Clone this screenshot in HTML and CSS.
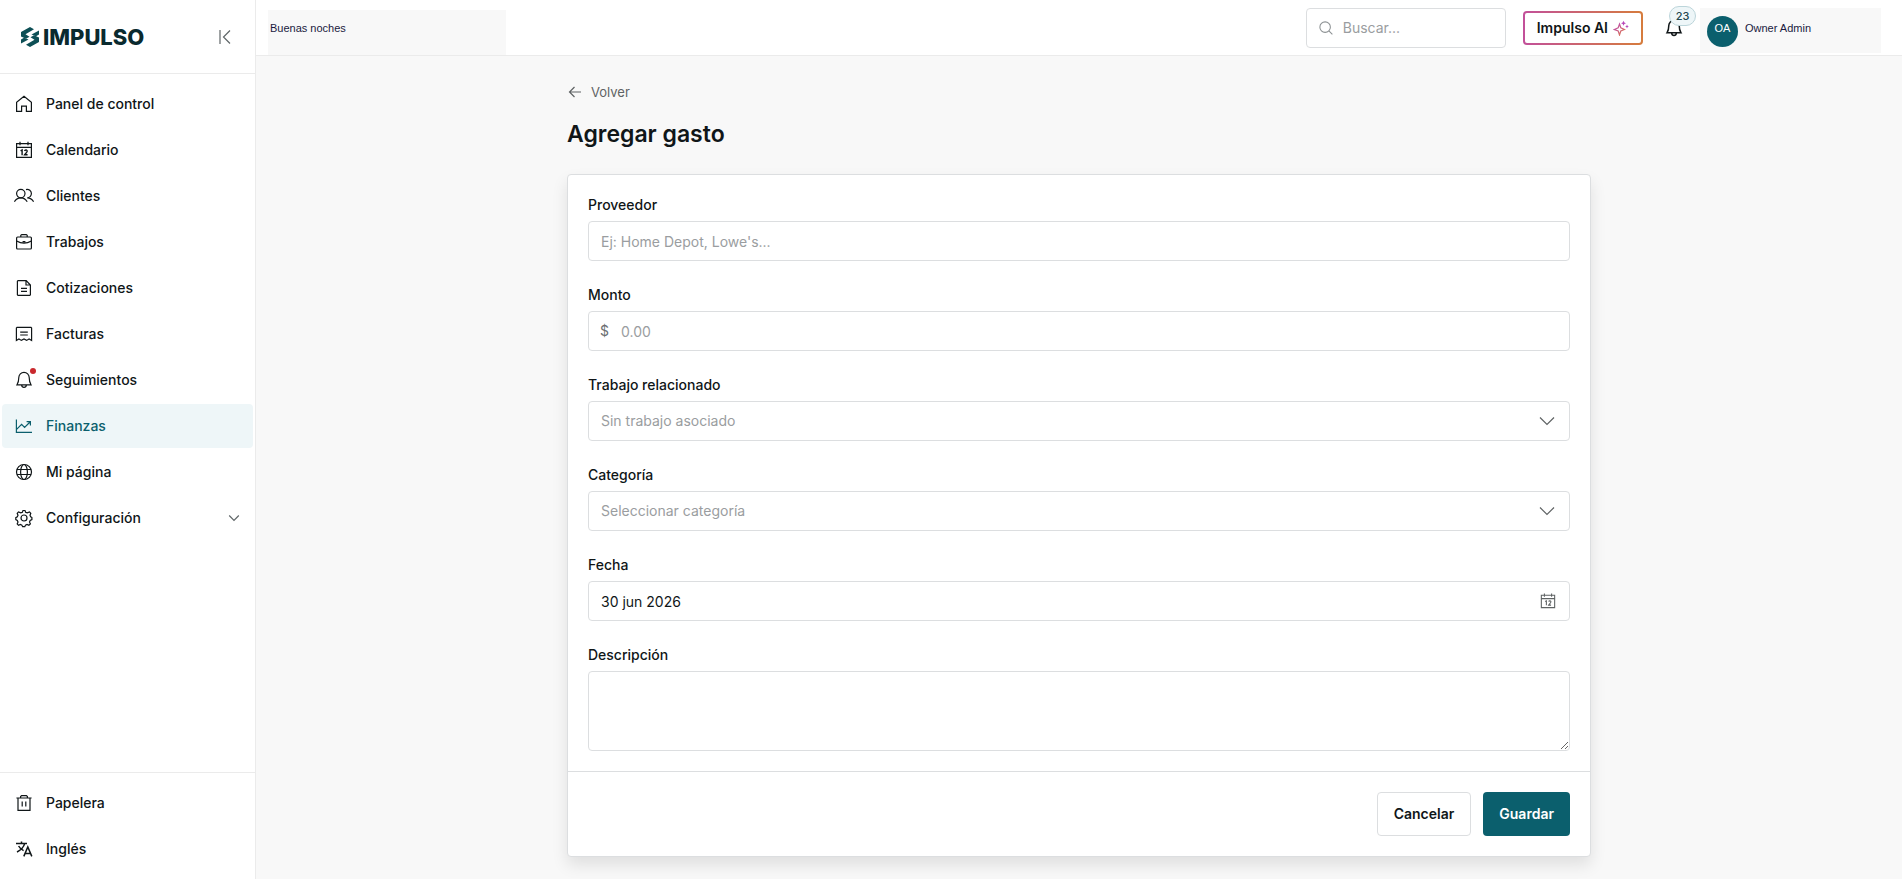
FILE: index.html
```html
<!DOCTYPE html>
<html lang="es">
<head>
  <meta charset="UTF-8">
  <title>Agregar gasto - Impulso</title>
  <meta name="viewport" content="width=device-width, initial-scale=1.0">
  <link rel="stylesheet" href="styles.css">
</head>
<body>

  <aside class="sidebar">
    <div class="sidebar-header">
      <a href="#" class="logo">
        <svg width="20" height="22" viewBox="0 0 20 22">
          <path d="M1 6l9-5 4 2.300-8.500 5 4 2.500-3.500 2L1 10.500z"/>
          <path d="M11.500 8.500L19 4.500v4l-3 1.700z"/>
          <path d="M19 16l-9 5-4-2.300 8.500-5-4-2.500 3.500-2 5 2.300z"/>
          <path d="M8.500 13.500L1 17.500v-4l3-1.700z"/>
        </svg>
        <span>IMPULSO</span>
      </a>
      <button type="button" class="icon-btn" aria-label="Contraer menú">
        <svg width="20" height="20" viewBox="0 0 20 20"><path d="M5 3v14M15 3.500L8.500 10l6.500 6.500"/></svg>
      </button>
    </div>

    <nav class="nav">
      <a href="#"><svg width="20" height="20" viewBox="0 0 20 20"><path d="M2.600 17.400V8.200L10 2.200l7.400 6v9.200h-5v-5.200H7.600v5.200z"/></svg>Panel de control</a>
      <a href="#"><svg width="20" height="20" viewBox="0 0 20 20"><path d="M2.600 3.600h14.800v13.800H2.600zM2.600 7.400h14.800M6 1.800v3.400M14 1.800v3.400"/><path stroke-width="1.400" d="M6.600 10.800l1.500-.9v5.300M10.600 11c.3-1.500 2.800-1.300 2.600.3-.1 1.100-1.700 2-2.600 3.400h3"/></svg>Calendario</a>
      <a href="#"><svg width="20" height="20" viewBox="0 0 20 20"><circle cx="6.800" cy="7.600" r="4.200"/><path d="M.4 15.800c1.400-2.600 3.700-4 6.400-4s5 1.400 6.400 4M12 3.600c3-.8 5.400 1.400 5.400 4a4.200 4.200 0 0 1-4.200 4.200c2.700 0 5 1.400 6.400 4"/></svg>Clientes</a>
      <a href="#"><svg width="20" height="20" viewBox="0 0 20 20"><rect x="2.600" y="5" width="14.800" height="12" rx="1"/><path d="M6.800 5V3.400l1-.8h4.400l1 .8V5M2.600 9c4.400 2.600 10.400 2.600 14.800 0M8.600 9.600h2.800"/></svg>Trabajos</a>
      <a href="#"><svg width="20" height="20" viewBox="0 0 20 20"><path d="M4 2.600h8.200L16.400 7v9.800l-.6.6H4l-.6-.6V3.200zM12 2.600V7h4.400M7 10.400h6M7 13.400h6"/></svg>Cotizaciones</a>
      <a href="#"><svg width="20" height="20" viewBox="0 0 20 20"><path d="M2.400 16.400V4l.6-.6h14l.6.6v12.400l-2.500-1.400-2.500 1.400-2.600-1.400-2.600 1.400L4.900 15zM6.200 8.200h7.600M6.200 11h7.600"/></svg>Facturas</a>
      <a href="#"><svg width="20" height="20" viewBox="0 0 20 20"><path d="M4.800 7.600a5.200 5.200 0 0 1 10.400 0c0 3.400.8 5.600 1.800 7.200H3c1-1.600 1.800-3.800 1.800-7.200zM7.600 15.200c.4 3 4.400 3 4.800 0"/></svg>Seguimientos<span class="dot"></span></a>
      <a href="#" class="active"><svg width="20" height="20" viewBox="0 0 20 20"><path d="M2.400 3.400v13H18M2.600 13.400l5-5 3 3L16 6M12.600 5.600h3.800v3.800"/></svg>Finanzas</a>
      <a href="#"><svg width="20" height="20" viewBox="0 0 20 20"><circle cx="10" cy="10" r="7.500"/><ellipse cx="10" cy="10" rx="3.400" ry="7.500"/><path d="M3 7.500h14M3 12.500h14"/></svg>Mi página</a>
      <a href="#"><svg width="20" height="20" viewBox="0 0 20 20"><circle cx="10" cy="10" r="3"/><path d="M8.400 4.200L9 2.500h2l.6 1.700 1.700.7 2.200-1 1.300 1.400-.8 1.900.7 1.600 1.200.8v2l-1.700.8-.7 1.600.9 1.900-1.500 1.400-1.900-.9-1.500.7-.7 1.600H8.600l-.7-1.600-1.500-.7-1.900.9-1.300-1.400.8-1.900-.7-1.600-1.500-.8v-2l1.500-.8.7-1.600-.8-1.900 1.300-1.400 2.200 1z"/></svg>Configuración<svg class="chevron" width="12" height="12" viewBox="0 0 12 12"><path d="M1.200 3.500L6 8.300l4.800-4.800"/></svg></a>
    </nav>

    <div class="nav nav-bottom">
      <a href="#"><svg width="20" height="20" viewBox="0 0 20 20"><path d="M2.400 5h15.200M4 5v12.400h12V5M6.600 5V3.600l1-1h4.800l1 1V5M8.200 8.600v5M11.800 8.600v5"/></svg>Papelera</a>
      <a href="#"><svg width="20" height="20" viewBox="0 0 20 20"><path stroke-width="1.500" d="M2 4.400h11M7.500 2.400v2M10.800 4.400C9.600 8.400 6.600 11.200 3 13M4.600 7c1.200 2.200 2.800 3.600 5 4.600M9.800 17.400l4-9.400 4 9.400M11 14.600h5.600"/></svg>Inglés</a>
    </div>
  </aside>

  <div class="page">
    <header class="topbar">
      <div class="greeting">Buenas noches</div>
      <div class="topbar-right">
        <label class="search">
          <svg width="14" height="14" viewBox="0 0 16 16"><circle cx="7" cy="7" r="6"/><path d="M11.300 11.300l4 4"/></svg>
          <input type="text" placeholder="Buscar..." aria-label="Buscar">
        </label>
        <button type="button" class="ai-btn">Impulso AI
          <svg width="16" height="16" viewBox="0 0 16 16">
            <defs><linearGradient id="ai" x2="1" y2="1"><stop offset="0" stop-color="#b848b8"/><stop offset="1" stop-color="#e07a4a"/></linearGradient></defs>
            <path stroke="url(#ai)" d="M6.500 4l1.300 3.700L11.500 9.500 7.800 11 6.500 15l-1.300-4L1.300 9.500l3.900-1.800z"/>
            <path fill="#b848b8" stroke="none" d="M10.500.8l.8 1.700 1.700.8-1.700.8-.8 1.700-.8-1.700L8 3.300l1.700-.8zM14 4.600l.6 1.300 1.300.6-1.300.6-.6 1.300-.6-1.300-1.300-.6 1.300-.6z"/>
          </svg>
        </button>
        <button type="button" class="bell" aria-label="Notificaciones">
          <svg width="20" height="20" viewBox="0 0 20 20"><path stroke-width="1.500" d="M4.800 7.600a5.200 5.200 0 0 1 10.400 0c0 3.400.8 5.600 1.800 7.200H3c1-1.600 1.800-3.800 1.800-7.200zM7.600 15.200c.4 3 4.400 3 4.800 0"/></svg>
          <span class="badge">23</span>
        </button>
        <div class="user">
          <span class="avatar">OA</span>
          <span>Owner Admin</span>
        </div>
      </div>
    </header>

    <main class="content">
      <a href="#" class="back"><svg width="16" height="16" viewBox="0 0 16 16"><path d="M14 8H2.500M7.500 3l-5 5 5 5"/></svg>Volver</a>
      <h1>Agregar gasto</h1>

      <form class="card">
        <div class="fields">
          <div class="field">
            <label for="proveedor">Proveedor</label>
            <input type="text" id="proveedor" placeholder="Ej: Home Depot, Lowe's...">
          </div>
          <div class="field">
            <label for="monto">Monto</label>
            <div class="control">
              <span class="prefix">$</span>
              <input type="text" id="monto" class="with-prefix" placeholder="0.00">
            </div>
          </div>
          <div class="field">
            <label for="trabajo">Trabajo relacionado</label>
            <div class="control">
              <select id="trabajo"><option>Sin trabajo asociado</option></select>
              <svg class="suffix" width="20" height="20" viewBox="0 0 20 20"><path d="M3 6.500l7 7 7-7"/></svg>
            </div>
          </div>
          <div class="field">
            <label for="categoria">Categoría</label>
            <div class="control">
              <select id="categoria"><option>Seleccionar categoría</option></select>
              <svg class="suffix" width="20" height="20" viewBox="0 0 20 20"><path d="M3 6.500l7 7 7-7"/></svg>
            </div>
          </div>
          <div class="field">
            <label for="fecha">Fecha</label>
            <div class="control">
              <input type="text" id="fecha" value="30 jun 2026">
              <svg class="suffix" width="18" height="20" viewBox="0 0 20 20"><path d="M2.600 3.600h14.800v13.800H2.600zM2.600 7.400h14.800M6 1.800v3.400M14 1.800v3.400M6.800 10.600l1.400-.8v5M10.800 10.800c.3-1.400 2.600-1.200 2.400.3-.1 1-1.600 2-2.500 3.500h2.700"/></svg>
            </div>
          </div>
          <div class="field">
            <label for="descripcion">Descripción</label>
            <textarea id="descripcion"></textarea>
          </div>
        </div>
        <div class="actions">
          <button type="button" class="btn">Cancelar</button>
          <button type="submit" class="btn btn-primary">Guardar</button>
        </div>
      </form>
    </main>
  </div>

</body>
</html>
```
FILE: styles.css
```css
* {
  box-sizing: border-box;
}
body {
  margin: 0;
  display: flex;
  min-height: 100vh;
  background-color: #f8f8f8;
  font-family: Inter, "Liberation Sans", sans-serif;
  font-size: 14px;
  line-height: 20px;
  color: #101618;
}
a {
  color: inherit;
  text-decoration: none;
}
button, input, select, textarea {
  font: inherit;
  color: inherit;
}
button {
  cursor: pointer;
}
svg {
  flex: none;
  fill: none;
  stroke: currentColor;
  stroke-width: 1.2;
}

/* sidebar */
.sidebar {
  position: sticky;
  top: 0;
  width: 256px;
  height: 100vh;
  flex: none;
  display: flex;
  flex-direction: column;
  background-color: #fff;
  border-right: 1px solid #ebebeb;
}
.sidebar-header {
  height: 74px;
  display: flex;
  align-items: center;
  justify-content: space-between;
  padding: 0 20px;
  border-bottom: 1px solid #ebebeb;
}
.logo {
  display: flex;
  align-items: center;
  gap: 3px;
  font-size: 22px;
  font-weight: 800;
  color: #0a2a2f;
}
.logo svg {
  fill: #0d4f55;
  stroke: none;
}
.icon-btn {
  display: flex;
  padding: 0;
  border: none;
  background: none;
  color: #5f6668;
}
.nav {
  flex: 1;
  display: flex;
  flex-direction: column;
  gap: 2px;
  padding: 8px 2px;
}
.nav a {
  position: relative;
  display: flex;
  align-items: center;
  gap: 12px;
  height: 44px;
  padding: 0 12px;
  border-radius: 4px;
  font-weight: 500;
}
.nav a.active {
  background-color: #eef6f8;
  color: #0b5f6d;
}
.nav-bottom {
  flex: none;
  border-top: 1px solid #ebebeb;
}
.chevron {
  margin: 0 1px 0 auto;
  color: #5f6668;
}
.dot {
  position: absolute;
  left: 28px;
  top: 10px;
  width: 6px;
  height: 6px;
  border-radius: 50%;
  background-color: #c9282d;
}

/* top bar */
.page {
  flex: 1;
  min-width: 0;
}
.topbar {
  height: 56px;
  display: flex;
  justify-content: space-between;
  padding: 0 21px 0 12px;
  background-color: #fff;
  border-bottom: 1px solid #ebebeb;
}
.greeting, .user {
  background-color: #f8f8f8;
  font-family: "Liberation Sans", sans-serif;
  font-size: 11px;
  color: #1a1a3e;
}
.greeting {
  width: 238px;
  margin-top: 10px;
  padding: 8px 2px;
}
.topbar-right {
  display: flex;
  align-items: center;
}
.search {
  display: flex;
  align-items: center;
  gap: 10px;
  width: 200px;
  height: 40px;
  padding: 0 12px;
  border: 1px solid #dcdee0;
  border-radius: 4px;
  color: #8c9193;
}
.search input {
  width: 100%;
  padding: 0;
  border: none;
  outline: none;
  background: none;
}
::placeholder {
  color: #9a9da0;
  opacity: 1;
}
.ai-btn {
  display: flex;
  align-items: center;
  gap: 5px;
  height: 34px;
  margin-left: 17px;
  padding: 0 12px;
  border: 2px solid transparent;
  border-radius: 4px;
  background: linear-gradient(#fff, #fff) padding-box, linear-gradient(90deg, #c2509a, #d67c3c) border-box;
  font-weight: 600;
}
.bell {
  position: relative;
  display: flex;
  margin-left: 21px;
  padding: 0;
  border: none;
  background: none;
}
.badge {
  position: absolute;
  left: 5px;
  bottom: 12px;
  width: 27px;
  height: 20px;
  border: 1px solid #bcd5da;
  border-radius: 10px;
  background-color: #eef6f8;
  font-size: 11px;
  font-weight: 500;
  line-height: 18px;
  color: #23474e;
}
.user {
  display: flex;
  align-self: flex-end;
  gap: 7px;
  width: 181px;
  height: 45px;
  margin: 0 0 2px 16px;
  padding: 8px 7px;
  line-height: 24px;
}
.avatar {
  width: 31px;
  height: 31px;
  border-radius: 50%;
  background-color: #0b5f6d;
  text-align: center;
  color: #fff;
}

/* form */
.content {
  max-width: 1072px;
  margin: 0 auto;
  padding: 24px;
}
.back {
  display: flex;
  align-items: center;
  gap: 8px;
  width: fit-content;
  font-size: 13px;
  line-height: 24px;
  color: #5f6364;
}
h1 {
  margin: 14px 0 24px;
  font-size: 23px;
  font-weight: 600;
  line-height: 32px;
}
.card {
  background-color: #fff;
  border: 1px solid #dcdee0;
  border-radius: 4px;
  box-shadow: 0 8px 16px rgba(0,0,0,0.1);
}
.fields {
  display: flex;
  flex-direction: column;
  gap: 24px;
  padding: 20px;
}
.field {
  display: flex;
  flex-direction: column;
  gap: 6px;
}
.field label {
  font-weight: 500;
}
.field input, .field select, .field textarea {
  display: block;
  width: 100%;
  height: 40px;
  padding: 0 12px;
  border: 1px solid #dcdee0;
  border-radius: 4px;
  background-color: #fff;
}
.field select {
  appearance: none;
  color: #9a9da0;
}
.field textarea {
  height: 80px;
  padding: 10px 12px;
  resize: vertical;
}
.field .with-prefix {
  padding-left: 32px;
}
.control {
  position: relative;
}
.prefix {
  position: absolute;
  left: 12px;
  top: 10px;
  color: #6a6e70;
}
.suffix {
  position: absolute;
  right: 13px;
  top: 10px;
  color: #5f6364;
  pointer-events: none;
}
.actions {
  display: flex;
  justify-content: flex-end;
  gap: 12px;
  padding: 20px;
  border-top: 1px solid #dcdee0;
}
.btn {
  height: 44px;
  padding: 0 16px;
  border: 1px solid #dcdee0;
  border-radius: 4px;
  background-color: #fff;
  font-weight: 600;
}
.btn-primary {
  border: none;
  background-color: #0b5f6d;
  color: #fff;
}
```
